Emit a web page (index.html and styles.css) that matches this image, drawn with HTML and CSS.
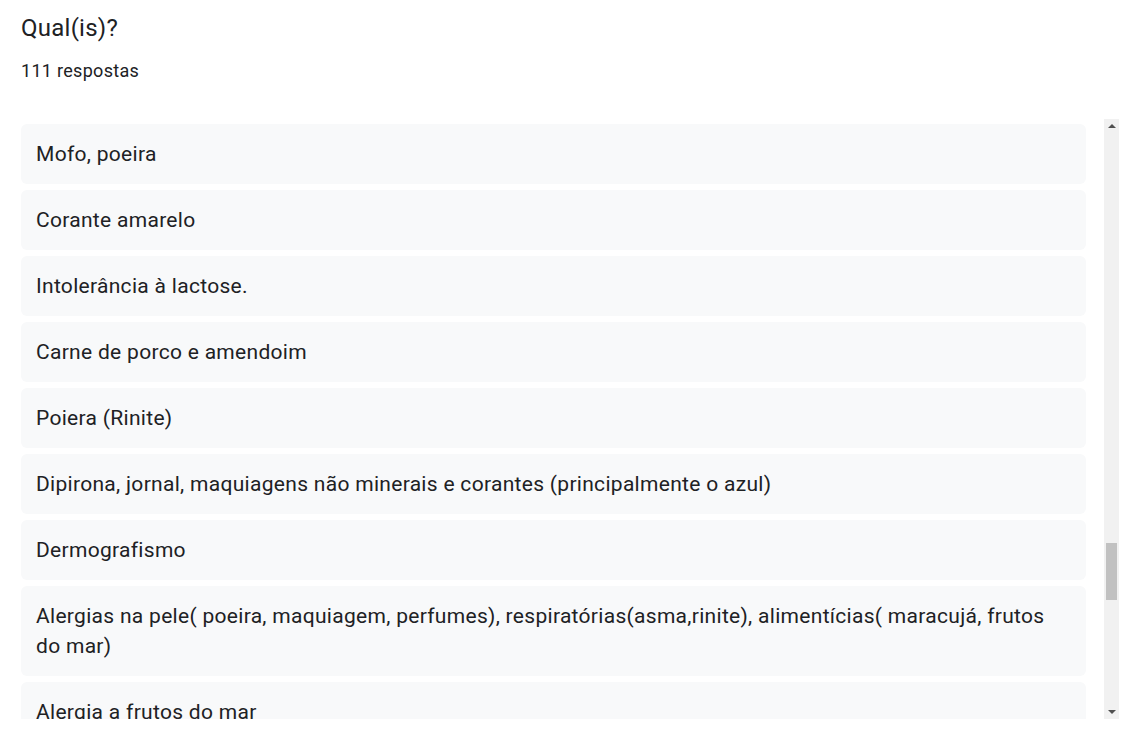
FILE: index.html
```html
<!DOCTYPE html>
<html lang="pt">
<head>
<meta charset="utf-8">
<title>Qual(is)?</title>
<link rel="stylesheet" href="styles.css">
</head>
<body>
<div class="page">
  <h1 class="title">Qual(is)?</h1>
  <div class="count">111 respostas</div>
  <div class="panel">
    <div class="list">
      <div class="item">Mofo, poeira</div>
      <div class="item">Corante amarelo</div>
      <div class="item">Intolerância à lactose.</div>
      <div class="item">Carne de porco e amendoim</div>
      <div class="item">Poiera (Rinite)</div>
      <div class="item">Dipirona, jornal, maquiagens não minerais e corantes (principalmente o azul)</div>
      <div class="item">Dermografismo</div>
      <div class="item">Alergias na pele( poeira, maquiagem, perfumes), respiratórias(asma,rinite), alimentícias( maracujá, frutos do mar)</div>
      <div class="item">Alergia a frutos do mar</div>
    </div>
    <div class="scrollbar">
      <div class="arrow arrow-up"></div>
      <div class="track"><div class="thumb"></div></div>
      <div class="arrow arrow-down"></div>
    </div>
  </div>
</div>
</body>
</html>
```
FILE: styles.css
```css
html, body {
  margin: 0;
  padding: 0;
  background: #ffffff;
}
body {
  font-family: Roboto, "Liberation Sans", Arial, sans-serif;
  color: #202124;
}
.page {
  padding: 12px 12px 0 21px;
}
.title {
  margin: 0;
  font-size: 24px;
  font-weight: 400;
  line-height: 32px;
  letter-spacing: 0.25px;
  color: #202124;
}
.count {
  margin-top: 15px;
  font-size: 18px;
  line-height: 24px;
  letter-spacing: 0.3px;
  color: #202124;
}
.panel {
  margin-top: 36px;
  display: flex;
  height: 600px;
  gap: 18px;
}
.list {
  flex: 1;
  overflow: hidden;
  padding-top: 5px;
  display: flex;
  flex-direction: column;
  gap: 6px;
}
.item {
  flex: none;
  background: #f8f9fa;
  border-radius: 6px;
  padding: 15px;
  font-size: 21px;
  line-height: 30px;
  letter-spacing: 0.3px;
}
.scrollbar {
  width: 15px;
  flex: none;
  background: #f1f1f1;
  display: flex;
  flex-direction: column;
}
.arrow {
  height: 14px;
  flex: none;
  display: flex;
  align-items: center;
  justify-content: center;
}
.arrow::before {
  content: "";
  width: 0;
  height: 0;
  border-left: 4px solid transparent;
  border-right: 4px solid transparent;
}
.arrow-up::before {
  border-bottom: 4px solid #505050;
}
.arrow-down::before {
  border-top: 4px solid #505050;
}
.track {
  flex: 1;
  padding-top: 410px;
}
.thumb {
  margin: 0 2px;
  height: 57px;
  background: #c1c1c1;
}
```
